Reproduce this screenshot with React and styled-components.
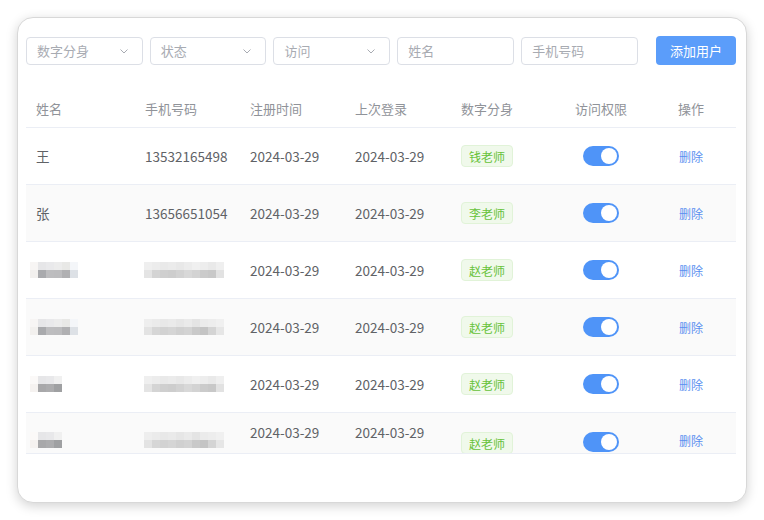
import React from 'react';
import styled, { createGlobalStyle } from 'styled-components';

const GlobalStyle = createGlobalStyle`
    body {
        margin: 0;
        background: #ffffff;
        font-family: 'Noto Sans CJK SC', 'Noto Sans', sans-serif;
    }
    * {
        box-sizing: border-box;
    }
`;

const NAME_A = [
    ['#f7f5f4', '#e6e6e8', '#e9e9eb', '#ececec', '#e8e8e6', '#f4f6f9'],
    ['#f2f0ee', '#a9aaad', '#bdbdbf', '#bcbcbe', '#b0b0b2', '#dde1e6'],
];
const NAME_B = [
    ['#fbf9f8', '#e6e6e8', '#e8e8ea', '#f0f0f0'],
    ['#f5f2f0', '#a8a8aa', '#acacae', '#9fa0a2'],
];
const PHONE_A = [
    ['#efefef', '#ececec', '#e9e9e9', '#ebebeb', '#e8e8e8', '#ececec', '#f0f0f0', '#ededed', '#e9e9e9', '#efefef'],
    ['#e4e4e4', '#d4d4d4', '#cfcfcf', '#cdcdcd', '#d2d2d2', '#d8d8d8', '#d3d3d3', '#cbcbcb', '#c8c8c8', '#e2e2e2'],
];
const PHONE_B = [
    ['#eeeeee', '#ebebeb', '#e8e8e8', '#eaeaea', '#e6e6e6', '#eaeaea', '#e4e4e4', '#ebebeb', '#ededed', '#f0f0f0'],
    ['#e3e3e3', '#d6d6d6', '#d2d2d2', '#d5d5d5', '#d0d0d0', '#d3d3d3', '#c9c9c9', '#c4c4c4', '#d4d4d4', '#e6e6e6'],
];

const rows = [
    { name: '王', phone: '13532165498', tag: '钱老师' },
    { name: '张', phone: '13656651054', tag: '李老师' },
    { name: NAME_A, phone: PHONE_A, tag: '赵老师' },
    { name: NAME_A, phone: PHONE_B, tag: '赵老师' },
    { name: NAME_B, phone: PHONE_A, tag: '赵老师' },
    { name: NAME_B, phone: PHONE_B, tag: '赵老师', clipped: true },
];

const Chevron = () => (
    <svg width="12" height="12" viewBox="0 0 12 12" fill="none">
        <path d="M2.5 4.5 L6 8 L9.5 4.5" stroke="#a8abb2" strokeWidth="1" />
    </svg>
);

const Mosaic = ({ cells }) => (
    <MosaicGrid $cols={cells[0].length}>
        {cells.flat().map((c, i) => (
            <MosaicCell key={i} style={{ background: c }} />
        ))}
    </MosaicGrid>
);

const App = () => {
    return (
        <>
            <GlobalStyle />
            <Page>
                <Card>
                    <FilterBar>
                        <Select>
                            数字分身
                            <Chevron />
                        </Select>
                        <Select>
                            状态
                            <Chevron />
                        </Select>
                        <Select>
                            访问
                            <Chevron />
                        </Select>
                        <Input placeholder="姓名" />
                        <Input placeholder="手机号码" />
                        <AddButton>添加用户</AddButton>
                    </FilterBar>

                    <Table>
                        <HeaderRow>
                            <Cell>姓名</Cell>
                            <Cell>手机号码</Cell>
                            <Cell>注册时间</Cell>
                            <Cell>上次登录</Cell>
                            <Cell>数字分身</Cell>
                            <Cell $center>访问权限</Cell>
                            <Cell $center>操作</Cell>
                        </HeaderRow>
                        <Body>
                            {rows.map((r, i) => (
                                <Row key={i} $striped={i % 2 === 1} $clipped={r.clipped}>
                                    <Cell>
                                        {typeof r.name === 'string' ? (
                                            r.name
                                        ) : (
                                            <NameMosaic>
                                                <Mosaic cells={r.name} />
                                            </NameMosaic>
                                        )}
                                    </Cell>
                                    <Cell>
                                        {typeof r.phone === 'string' ? (
                                            r.phone
                                        ) : (
                                            <PhoneMosaic>
                                                <Mosaic cells={r.phone} />
                                            </PhoneMosaic>
                                        )}
                                    </Cell>
                                    <Cell $raised={r.clipped}>2024-03-29</Cell>
                                    <Cell $raised={r.clipped}>2024-03-29</Cell>
                                    <Cell>
                                        <Tag>{r.tag}</Tag>
                                    </Cell>
                                    <Cell $center>
                                        <Switch>
                                            <Knob />
                                        </Switch>
                                    </Cell>
                                    <Cell $center>
                                        <DeleteLink>删除</DeleteLink>
                                    </Cell>
                                </Row>
                            ))}
                        </Body>
                    </Table>
                </Card>
            </Page>
        </>
    );
};

export default App;

const Page = styled.div`
    width: 764px;
    height: 520px;
    padding: 17px;
`;

const Card = styled.div`
    width: 730px;
    height: 486px;
    padding: 18px 10px 0 8px;
    background: #ffffff;
    border: 1px solid #d8d8d8;
    border-radius: 16px;
    box-shadow: 0 3px 12px rgba(0, 0, 0, 0.18);
`;

const FilterBar = styled.div`
    display: flex;
    align-items: center;
    gap: 7px;
    height: 29px;
`;

const Select = styled.div`
    display: flex;
    align-items: center;
    justify-content: space-between;
    width: 117px;
    height: 28px;
    padding: 0 12px 0 10px;
    border: 1px solid #dcdfe6;
    border-radius: 4px;
    color: #a8abb2;
    font-size: 13px;
`;

const Input = styled.input`
    width: 117px;
    height: 28px;
    padding: 0 10px;
    border: 1px solid #dcdfe6;
    border-radius: 4px;
    font-family: inherit;
    font-size: 13px;
    outline: none;

    &::placeholder {
        color: #a8abb2;
    }
`;

const AddButton = styled.button`
    width: 80px;
    height: 29px;
    margin-left: 11px;
    border: none;
    border-radius: 4px;
    background: #5b9dfa;
    color: #ffffff;
    font-family: inherit;
    font-size: 13px;
`;

const Table = styled.div`
    width: 710px;
    margin-top: 25px;
`;

const columns = '109px 105px 105px 106px 105px 90px 90px';

const HeaderRow = styled.div`
    display: grid;
    grid-template-columns: ${columns};
    align-items: center;
    height: 38px;
    padding-bottom: 1px;
    border-bottom: 1px solid #ebeef5;
    color: #909399;
    font-size: 13px;
`;

const Body = styled.div`
    height: 326px;
    overflow: hidden;
    border-bottom: 1px solid #ebeef5;
`;

const Row = styled.div`
    display: grid;
    grid-template-columns: ${columns};
    align-items: center;
    height: 57px;
    border-bottom: 1px solid #ebeef5;
    background: ${(p) => (p.$striped ? '#fafafa' : '#ffffff')};
    color: #606266;
    font-size: 13.5px;
    ${(p) => p.$clipped && 'height: 40px; align-items: start; padding-top: 19px; border-bottom: none;'}
`;

const Cell = styled.div`
    display: flex;
    align-items: center;
    justify-content: ${(p) => (p.$center ? 'center' : 'flex-start')};
    padding: 0 10px;
    white-space: nowrap;
    ${(p) => p.$raised && 'margin-top: -10px;'}
`;

const NameMosaic = styled.div`
    margin-left: -6px;
`;

const PhoneMosaic = styled.div`
    margin-left: -1px;
`;

const MosaicGrid = styled.div`
    display: grid;
    grid-template-columns: repeat(${(p) => p.$cols}, 8px);
    grid-auto-rows: 8px;
`;

const MosaicCell = styled.div`
    width: 8px;
    height: 8px;
`;

const Tag = styled.span`
    display: inline-flex;
    align-items: center;
    height: 22px;
    padding: 0 7px;
    border: 1px solid #e1f3d8;
    border-radius: 4px;
    background: #f0f9eb;
    color: #67c23a;
    font-size: 12px;
`;

const Switch = styled.span`
    position: relative;
    display: inline-block;
    width: 36px;
    height: 20px;
    border-radius: 10px;
    background: #4f94f8;
`;

const Knob = styled.span`
    position: absolute;
    top: 2px;
    right: 2px;
    width: 16px;
    height: 16px;
    border-radius: 50%;
    background: #ffffff;
`;

const DeleteLink = styled.span`
    color: #5a8ff0;
    font-size: 12px;
    cursor: pointer;
`;
